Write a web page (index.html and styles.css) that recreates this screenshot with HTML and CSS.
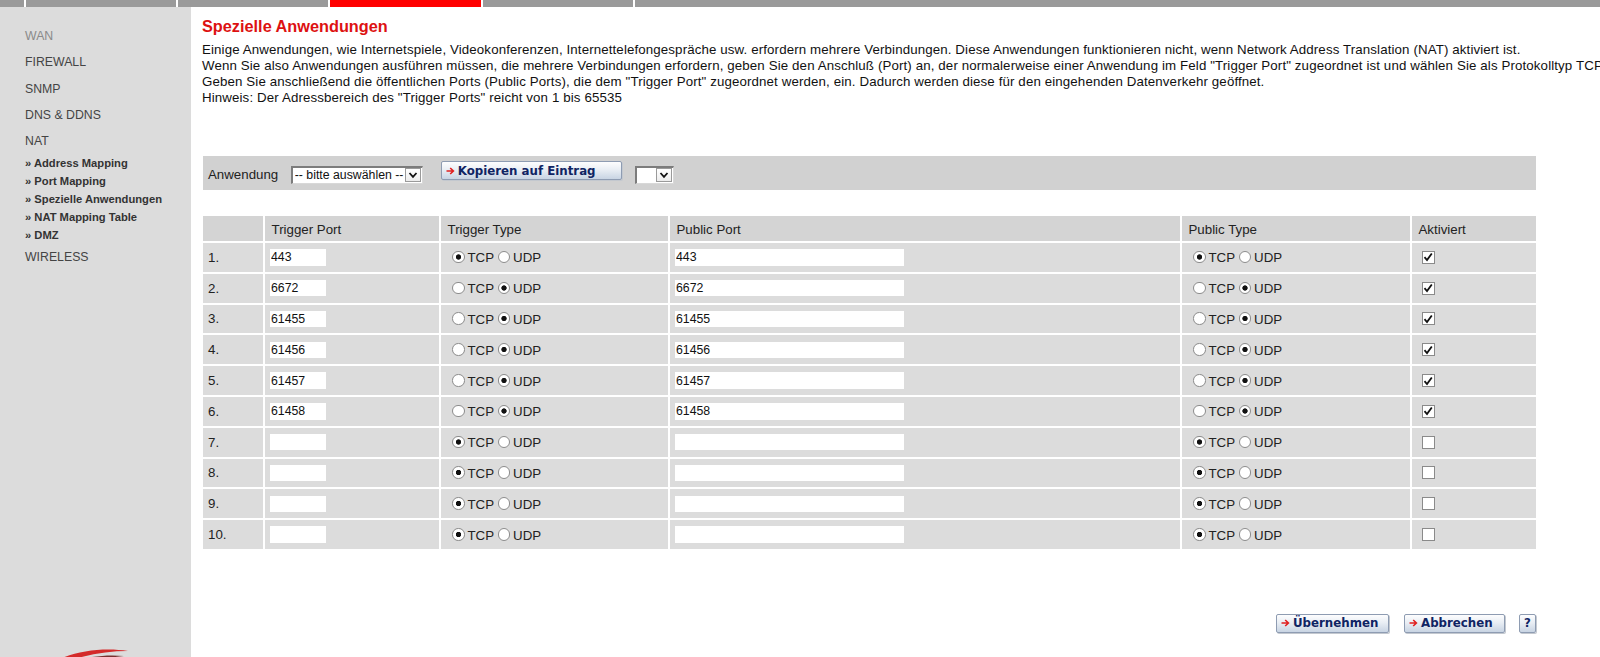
FILE: index.html
```html
<!DOCTYPE html>
<html lang="de">
<head>
<meta charset="utf-8">
<title>Spezielle Anwendungen</title>
<link rel="stylesheet" href="styles.css">
</head>
<body>
<div class="topbar">
  <span class="tab t1"></span><span class="tab t2"></span><span class="tab t3"></span><span class="tab t4"></span><span class="tab t5"></span><span class="tab t6"></span>
</div>
<div class="main">
  <aside class="side">
    <ul class="nav">
      <li class="dim">WAN</li>
      <li>FIREWALL</li>
      <li>SNMP</li>
      <li>DNS &amp; DDNS</li>
      <li>NAT
        <ul class="sub">
          <li>» Address Mapping</li>
          <li>» Port Mapping</li>
          <li>»&nbsp;Spezielle Anwendungen</li>
          <li>» NAT Mapping Table</li>
          <li>» DMZ</li>
        </ul>
      </li>
      <li>WIRELESS</li>
    </ul>
    <div class="logo">
      <svg width="90" height="30" viewBox="0 0 90 30">
        <path d="M2 14 C 20 4, 50 0, 74 4 C 52 4, 28 8, 4 18 Z" fill="#d42a2a"/>
        <path d="M6 20 C 26 10, 50 7, 70 9 C 50 11, 28 15, 8 24 Z" fill="#7a3030"/>
      </svg>
    </div>
  </aside>
  <section class="content">
    <h1 class="title">Spezielle Anwendungen</h1>
    <p class="intro">Einige Anwendungen, wie Internetspiele, Videokonferenzen, Internettelefongespräche usw. erfordern mehrere Verbindungen. Diese Anwendungen funktionieren nicht, wenn Network Address Translation (NAT) aktiviert ist.<br>Wenn Sie also Anwendungen ausführen müssen, die mehrere Verbindungen erfordern, geben Sie den Anschluß (Port) an, der normalerweise einer Anwendung im Feld "Trigger Port" zugeordnet ist und wählen Sie als Protokolltyp TCP oder UDP aus.<br>Geben Sie anschließend die öffentlichen Ports (Public Ports), die dem "Trigger Port" zugeordnet werden, ein. Dadurch werden diese für den eingehenden Datenverkehr geöffnet.<br>Hinweis: Der Adressbereich des "Trigger Ports" reicht von 1 bis 65535</p>

    <div class="toolbar">
      <span class="tb-label">Anwendung</span>
      <label class="sel sel-app"><select class="sel-in"><option>-- bitte auswählen --</option></select><span class="sel-arr"><svg width="10" height="8" viewBox="0 0 10 8"><path d="M1.5 2 L5 5.8 L8.5 2" fill="none" stroke="#111" stroke-width="1.8"/></svg></span></label>
      <button class="btn btn-copy" type="button"><svg class="arr" width="9" height="8" viewBox="0 0 9 8"><path d="M0.5 4 H7 M4.2 1 L7.4 4 L4.2 7" fill="none" stroke="#e02020" stroke-width="1.6"/></svg>Kopieren auf Eintrag</button>
      <label class="sel sel-num"><select class="sel-in"><option></option></select><span class="sel-arr"><svg width="10" height="8" viewBox="0 0 10 8"><path d="M1.5 2 L5 5.8 L8.5 2" fill="none" stroke="#111" stroke-width="1.8"/></svg></span></label>
    </div>

    <table class="grid">
      <colgroup>
        <col class="c1"><col class="c2"><col class="c3"><col class="c4"><col class="c5"><col class="c6">
      </colgroup>
      <thead>
        <tr><th></th><th>Trigger Port</th><th>Trigger Type</th><th>Public Port</th><th>Public Type</th><th>Aktiviert</th></tr>
      </thead>
      <tbody>
        <tr><td>1.</td><td><input class="tp" value="443"></td><td class="ty"><span class="rd on"></span>TCP <span class="rd"></span>UDP</td><td><input class="pp" value="443"></td><td class="ty"><span class="rd on"></span>TCP <span class="rd"></span>UDP</td><td class="ak"><span class="cb on"><svg width="10" height="10" viewBox="0 0 10 10"><path d="M1.5 5.2 L4 8 L8.8 1.5" fill="none" stroke="#111" stroke-width="1.8"/></svg></span></td></tr>
        <tr><td>2.</td><td><input class="tp" value="6672"></td><td class="ty"><span class="rd"></span>TCP <span class="rd on"></span>UDP</td><td><input class="pp" value="6672"></td><td class="ty"><span class="rd"></span>TCP <span class="rd on"></span>UDP</td><td class="ak"><span class="cb on"><svg width="10" height="10" viewBox="0 0 10 10"><path d="M1.5 5.2 L4 8 L8.8 1.5" fill="none" stroke="#111" stroke-width="1.8"/></svg></span></td></tr>
        <tr><td>3.</td><td><input class="tp" value="61455"></td><td class="ty"><span class="rd"></span>TCP <span class="rd on"></span>UDP</td><td><input class="pp" value="61455"></td><td class="ty"><span class="rd"></span>TCP <span class="rd on"></span>UDP</td><td class="ak"><span class="cb on"><svg width="10" height="10" viewBox="0 0 10 10"><path d="M1.5 5.2 L4 8 L8.8 1.5" fill="none" stroke="#111" stroke-width="1.8"/></svg></span></td></tr>
        <tr><td>4.</td><td><input class="tp" value="61456"></td><td class="ty"><span class="rd"></span>TCP <span class="rd on"></span>UDP</td><td><input class="pp" value="61456"></td><td class="ty"><span class="rd"></span>TCP <span class="rd on"></span>UDP</td><td class="ak"><span class="cb on"><svg width="10" height="10" viewBox="0 0 10 10"><path d="M1.5 5.2 L4 8 L8.8 1.5" fill="none" stroke="#111" stroke-width="1.8"/></svg></span></td></tr>
        <tr><td>5.</td><td><input class="tp" value="61457"></td><td class="ty"><span class="rd"></span>TCP <span class="rd on"></span>UDP</td><td><input class="pp" value="61457"></td><td class="ty"><span class="rd"></span>TCP <span class="rd on"></span>UDP</td><td class="ak"><span class="cb on"><svg width="10" height="10" viewBox="0 0 10 10"><path d="M1.5 5.2 L4 8 L8.8 1.5" fill="none" stroke="#111" stroke-width="1.8"/></svg></span></td></tr>
        <tr><td>6.</td><td><input class="tp" value="61458"></td><td class="ty"><span class="rd"></span>TCP <span class="rd on"></span>UDP</td><td><input class="pp" value="61458"></td><td class="ty"><span class="rd"></span>TCP <span class="rd on"></span>UDP</td><td class="ak"><span class="cb on"><svg width="10" height="10" viewBox="0 0 10 10"><path d="M1.5 5.2 L4 8 L8.8 1.5" fill="none" stroke="#111" stroke-width="1.8"/></svg></span></td></tr>
        <tr><td>7.</td><td><input class="tp" value=""></td><td class="ty"><span class="rd on"></span>TCP <span class="rd"></span>UDP</td><td><input class="pp" value=""></td><td class="ty"><span class="rd on"></span>TCP <span class="rd"></span>UDP</td><td class="ak"><span class="cb"></span></td></tr>
        <tr><td>8.</td><td><input class="tp" value=""></td><td class="ty"><span class="rd on"></span>TCP <span class="rd"></span>UDP</td><td><input class="pp" value=""></td><td class="ty"><span class="rd on"></span>TCP <span class="rd"></span>UDP</td><td class="ak"><span class="cb"></span></td></tr>
        <tr><td>9.</td><td><input class="tp" value=""></td><td class="ty"><span class="rd on"></span>TCP <span class="rd"></span>UDP</td><td><input class="pp" value=""></td><td class="ty"><span class="rd on"></span>TCP <span class="rd"></span>UDP</td><td class="ak"><span class="cb"></span></td></tr>
        <tr><td>10.</td><td><input class="tp" value=""></td><td class="ty"><span class="rd on"></span>TCP <span class="rd"></span>UDP</td><td><input class="pp" value=""></td><td class="ty"><span class="rd on"></span>TCP <span class="rd"></span>UDP</td><td class="ak"><span class="cb"></span></td></tr>
      </tbody>
    </table>

    <div class="actions">
      <button class="btn btn-ok" type="button"><svg class="arr" width="9" height="8" viewBox="0 0 9 8"><path d="M0.5 4 H7 M4.2 1 L7.4 4 L4.2 7" fill="none" stroke="#e02020" stroke-width="1.6"/></svg>Übernehmen</button>
      <button class="btn btn-cancel" type="button"><svg class="arr" width="9" height="8" viewBox="0 0 9 8"><path d="M0.5 4 H7 M4.2 1 L7.4 4 L4.2 7" fill="none" stroke="#e02020" stroke-width="1.6"/></svg>Abbrechen</button>
      <button class="btn btn-help" type="button">?</button>
    </div>
  </section>
</div>
</body>
</html>
```

FILE: styles.css
```css
html, body {
  margin: 0;
  padding: 0;
}
body {
  width: 1600px;
  height: 657px;
  overflow: hidden;
  background: #fff;
  font-family: "Liberation Sans", Arial, sans-serif;
  color: #1a1a1a;
}

/* top tab bar */
.topbar {
  display: flex;
  gap: 2px;
  height: 7px;
  background: #fff;
}
.tab { background: #9a9a9a; display: block; }
.t1 { width: 24px; }
.t2 { width: 150px; }
.t3 { width: 150px; }
.t4 { width: 151px; background: #ff0000; }
.t5 { width: 150px; }
.t6 { flex: 1; }

.main {
  display: flex;
  height: 650px;
}

/* sidebar */
.side {
  flex: none;
  width: 191px;
  background: #dcdcdc;
  overflow: hidden;
}
.nav {
  list-style: none;
  margin: 0;
  padding: 16px 0 0 25px;
}
.nav > li {
  font-size: 12.3px;
  line-height: 26.3px;
  color: #444;
}
.nav > li.dim { color: #8a8a8a; }
.sub {
  list-style: none;
  margin: 0;
  padding: 0;
}
.sub li {
  font-size: 11.2px;
  font-weight: bold;
  line-height: 18px;
  color: #333;
}
.logo {
  margin-top: 376px;
  padding-left: 54px;
}
.logo svg { display: block; }

/* content */
.content {
  flex: 1;
  padding-left: 11px;
  min-width: 0;
  overflow: hidden;
}
.title {
  margin: 9.5px 0 0;
  font-size: 16.3px;
  line-height: 18px;
  font-weight: bold;
  color: #dd1111;
}
.intro {
  margin: 7.5px 0 0;
  font-size: 13.3px;
  letter-spacing: 0.12px;
  line-height: 16px;
  white-space: nowrap;
  color: #111;
}

/* toolbar */
.toolbar {
  margin: 50px 0 0 1px;
  width: 1333px;
  height: 34px;
  box-sizing: border-box;
  background: #d1d1d1;
  display: flex;
  align-items: flex-start;
  padding-left: 5px;
}
.tb-label {
  margin-top: 9.5px;
  font-size: 13.3px;
  line-height: 18px;
  color: #222;
}
.sel {
  display: flex;
  margin-top: 10px;
  height: 18px;
  box-sizing: border-box;
  background: #fff;
  border-top: 2px solid #7c7c7c;
  border-left: 2px solid #7c7c7c;
  border-right: 1px solid #d8d8d8;
  border-bottom: 1px solid #d8d8d8;
}
.sel-app { margin-left: 12.5px; width: 132px; }
.sel-num { margin-left: 13px; width: 39px; }
.sel-in {
  appearance: none;
  -webkit-appearance: none;
  border: 0;
  outline: 0;
  background: transparent;
  flex: 1;
  min-width: 0;
  padding: 0 0 0 2px;
  margin: 0;
  height: 15px;
  font-family: "Liberation Sans", Arial, sans-serif;
  font-size: 12.3px;
  line-height: 15px;
  color: #111;
}
.sel-arr {
  flex: none;
  width: 16px;
  height: 14px;
  margin: 0 1px 0 0;
  box-sizing: border-box;
  border: 1px solid #9a9a9a;
  background: linear-gradient(#ffffff, #ececec);
  display: flex;
  align-items: center;
  justify-content: center;
}
.sel-arr svg { display: block; }

/* buttons */
.btn {
  display: inline-flex;
  align-items: center;
  height: 18px;
  box-sizing: border-box;
  margin: 0;
  padding: 0 4px;
  border: 1px solid #8e9cb2;
  border-radius: 2px;
  background: linear-gradient(#fdfdfe 0%, #e9eef4 45%, #c8d4e3 100%);
  box-shadow: 1px 1px 0 #c3c8cf;
  font-family: "DejaVu Sans", Verdana, sans-serif;
  font-weight: bold;
  font-size: 11.8px;
  line-height: 14px;
  color: #0f2463;
  cursor: pointer;
}
.btn .arr { flex: none; margin-right: 3px; }
.btn-copy {
  margin: 5px 0 0 18px;
  width: 181px;
  height: 19px;
}
.btn-ok { width: 113px; height: 19px; }
.btn-cancel { width: 101px; height: 19px; margin-left: 15px; }
.btn-help {
  width: 17px;
  height: 19px;
  margin-left: 14px;
  padding: 0;
  justify-content: center;
}

/* table */
.grid {
  margin: 26px 0 0 1px;
  width: 1333px;
  table-layout: fixed;
  border-collapse: separate;
  border-spacing: 0;
  font-size: 13.3px;
  color: #222;
}
.c1 { width: 62px; }
.c2 { width: 176px; }
.c3 { width: 229px; }
.c4 { width: 512px; }
.c5 { width: 230px; }
.c6 { width: 124px; }
.grid th, .grid td {
  border-right: 2px solid #fff;
  border-bottom: 2px solid #fff;
  padding: 0 0 0 5px;
  text-align: left;
  white-space: nowrap;
  vertical-align: middle;
}
.grid th {
  background: #d4d4d4;
  height: 27px;
  font-weight: normal;
  padding-left: 6.5px;
  padding-top: 1px;
  box-sizing: border-box;
}
.grid th:first-child { padding-left: 5px; }
.grid td {
  background: #dcdcdc;
  height: 30.8px;
  box-sizing: border-box;
}
.grid th:last-child, .grid td:last-child { border-right: 0; }

.tp, .pp {
  display: block;
  height: 16.5px;
  box-sizing: border-box;
  border: 0;
  outline: 0;
  margin: 0;
  padding: 0 1px;
  background: #fff;
  font-family: "Liberation Sans", Arial, sans-serif;
  font-size: 12.3px;
  color: #111;
}
.tp { width: 56px; }
.pp { width: 229px; }
.grid td.ty { padding-left: 11px; padding-top: 1px; }

.rd {
  display: inline-block;
  width: 12.5px;
  height: 12.5px;
  box-sizing: border-box;
  border: 1px solid #8c8c8c;
  border-radius: 50%;
  background: #fff;
  vertical-align: -1px;
  margin-right: 3px;
}
.rd.on {
  background: radial-gradient(circle at 50% 50%, #111 0, #111 2.3px, #fff 3px);
}

.grid td.ak { padding-left: 9.5px; }
.cb {
  display: flex;
  align-items: center;
  justify-content: center;
  width: 13px;
  height: 13px;
  box-sizing: border-box;
  border: 1px solid #8a8a8a;
  background: #fff;
}
.cb svg { display: block; }

/* bottom actions */
.actions {
  margin: 63px 0 0 1px;
  width: 1333px;
  display: flex;
  justify-content: flex-end;
}
```
